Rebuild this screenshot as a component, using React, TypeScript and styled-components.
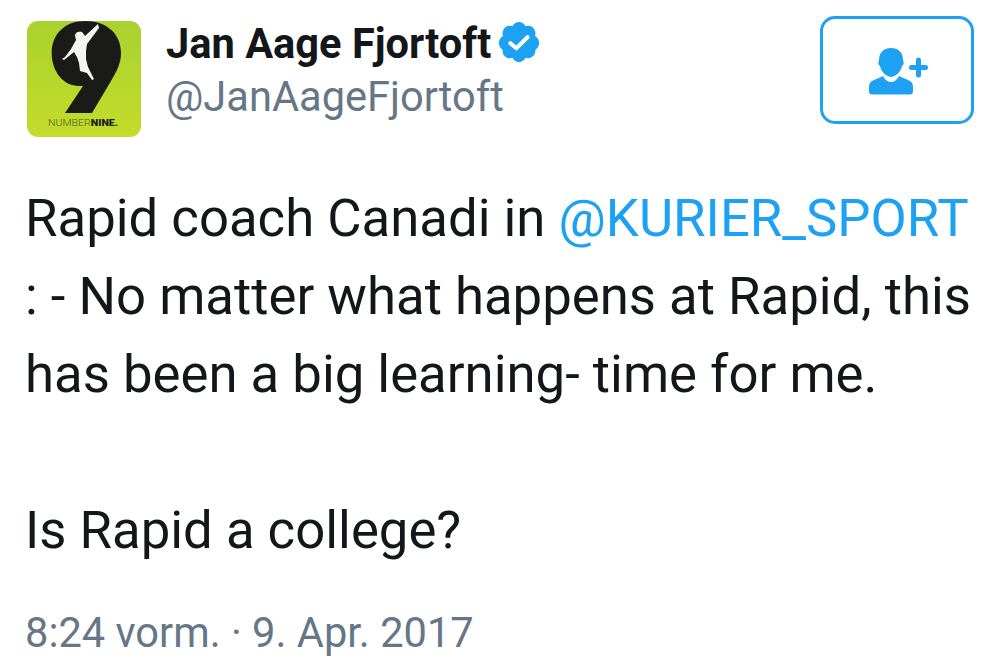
import React from "react";
import styled, { createGlobalStyle } from "styled-components";

const GlobalStyle = createGlobalStyle`
  html, body {
    margin: 0;
    padding: 0;
    background: #ffffff;
    font-family: Roboto, "Liberation Sans", sans-serif;
  }
`;

const Page = styled.div`
  width: 1000px;
  height: 663px;
  box-sizing: border-box;
  padding: 16px 26px 0 27px;
  overflow: hidden;
`;

const Header = styled.div`
  display: flex;
  align-items: flex-start;
`;

const Avatar = styled.svg`
  width: 114px;
  height: 116px;
  margin-top: 5px;
  flex-shrink: 0;
`;

const Names = styled.div`
  margin-left: 25px;
  flex: 1;
  padding-top: 4px;
`;

const NameRow = styled.div`
  display: flex;
  align-items: center;
  height: 46px;
`;

const Name = styled.span`
  font-size: 41.6px;
  font-weight: 700;
  color: #14171a;
`;

const Badge = styled.svg`
  width: 46px;
  height: 46px;
  margin: -2px 0 0 5px;
`;

const Handle = styled.div`
  font-size: 41.6px;
  line-height: 46px;
  margin-top: 8px;
  color: #657786;
`;

const FollowButton = styled.button`
  width: 154px;
  height: 108px;
  box-sizing: border-box;
  border: 3px solid #1da1f2;
  border-radius: 15px;
  background: #ffffff;
  display: flex;
  align-items: center;
  justify-content: center;
  padding: 0;
`;

const Body = styled.div`
  margin: 42px 0 0 -2px;
  font-size: 52.7px;
  line-height: 78px;
  color: #14171a;
  white-space: pre-line;
`;

const Mention = styled.span`
  color: #1da1f2;
`;

const Stamp = styled.div`
  margin: 40px 0 0 -2px;
  font-size: 41.6px;
  line-height: 48px;
  color: #657786;
`;

const Logo = () => (
  <Avatar viewBox="0 0 114 116">
    <defs>
      <linearGradient id="lime" x1="0" y1="0" x2="0" y2="1">
        <stop offset="0" stopColor="#a9d12f" />
        <stop offset="1" stopColor="#c4dc2a" />
      </linearGradient>
      <clipPath id="tile">
        <rect width="114" height="116" rx="11" />
      </clipPath>
    </defs>
    <g clipPath="url(#tile)">
      <rect width="114" height="116" fill="url(#lime)" />
      <path
        d="M58 0C38 0 24.700 13 24.700 32C24.700 50 36 65 52 65L56 65L38 92H65L84 60C90 50 94 42 94 32C94 13 80 0 58 0Z"
        fill="#1a1a18"
      />
      <path
        d="M71 3L58 15L55 11C52 10 48 11 48 15L49 19L44 28L38 36L35 38L37 39L47 31L50 36L52 42L53 50L60 52L65 59L67 58L61 46L59 38L59 30L60 23L72 7Z"
        fill="#f4f4f0"
      />
      <text x="21" y="105" fontFamily="Roboto, sans-serif" fontSize="9.500" fontWeight="300" fill="#4f5a1c" textLength="70" lengthAdjust="spacingAndGlyphs">
        NUMBER
        <tspan fontWeight="900" fill="#1a1a18">NINE.</tspan>
      </text>
    </g>
  </Avatar>
);

const App = () => (
  <>
    <GlobalStyle />
    <Page>
      <Header>
        <Logo />
        <Names>
          <NameRow>
            <Name>Jan Aage Fjortoft</Name>
            <Badge viewBox="0 0 24 24">
              <path
                d="M22.5 12.5c0-1.58-.875-2.95-2.148-3.6.154-.435.238-.905.238-1.4 0-2.21-1.71-3.998-3.818-3.998-.47 0-.92.084-1.336.25C14.818 2.415 13.51 1.5 12 1.5s-2.816.917-3.437 2.25c-.415-.165-.866-.25-1.336-.25-2.11 0-3.818 1.79-3.818 4 0 .494.083.964.237 1.4-1.272.65-2.147 2.018-2.147 3.6 0 1.495.782 2.798 1.942 3.486-.02.17-.032.34-.032.514 0 2.21 1.708 4 3.818 4 .47 0 .92-.086 1.335-.25.62 1.334 1.926 2.25 3.437 2.25 1.512 0 2.818-.916 3.437-2.25.415.163.865.248 1.336.248 2.11 0 3.818-1.79 3.818-4 0-.174-.012-.344-.033-.513 1.158-.687 1.943-1.99 1.943-3.484z"
                fill="#1da1f2"
              />
              <path d="M7.500 12.600l3.100 2.700 5.800-5.800" fill="none" stroke="#ffffff" strokeWidth="2.100" strokeLinecap="round" strokeLinejoin="round" />
            </Badge>
          </NameRow>
          <Handle>@JanAageFjortoft</Handle>
        </Names>
        <FollowButton aria-label="Follow">
          <svg width="62" height="50" viewBox="0 0 62 50">
            <path
              d="M25 3C17 3 13 8 13 15C12 17 12 20 14 21C15 26 19 31 25 32C31 31 35 26 36 21C38 20 38 17 37 15C37 8 33 3 25 3Z"
              fill="#1da1f2"
            />
            <path
              d="M17 31C19 35 22 37 25 37C28 37 31 35 33 31C36 33 41 34 44 36C46 37 47 39 47 43V46Q47 49.500 44 49.500H6Q3 49.500 3 46V43C3 39 4 37 6 36C9 34 14 33 17 31Z"
              fill="#1da1f2"
            />
            <path d="M45.500 22.500H59.500M52.500 15V30" fill="none" stroke="#1da1f2" strokeWidth="5" strokeLinecap="round" />
          </svg>
        </FollowButton>
      </Header>
      <Body>
        {"Rapid coach Canadi in "}
        <Mention>@KURIER_SPORT</Mention>
        {"\n: - No matter what happens at Rapid, this\nhas been a big learning- time for me.\n\nIs Rapid a college?"}
      </Body>
      <Stamp>8:24 vorm. · 9. Apr. 2017</Stamp>
    </Page>
  </>
);

export default App;
